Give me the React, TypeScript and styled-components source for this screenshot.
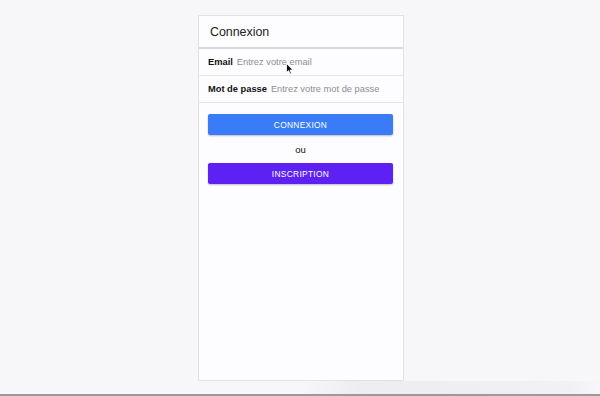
import styled, { createGlobalStyle } from "styled-components";

const GlobalStyle = createGlobalStyle`
  html, body {
    margin: 0;
    padding: 0;
    background: #f7f7f9;
    font-family: "Liberation Sans", Arial, sans-serif;
  }
`;

const Page = styled.div`
  height: 396px;
  display: flex;
  flex-direction: column;
  overflow: hidden;
`;

const Stage = styled.div`
  flex: 1;
  display: flex;
  padding: 15px 0 0 198px;
`;

const Card = styled.div`
  width: 204px;
  height: 364px;
  background: #fdfdff;
  border: 1px solid #e2e2e6;
  display: flex;
  flex-direction: column;
  position: relative;
`;

const Header = styled.div`
  height: 31px;
  display: flex;
  align-items: center;
  padding-left: 11px;
  font-size: 12.4px;
  color: #222;
  border-bottom: 2px solid #d9d9dd;
`;

const Row = styled.div`
  height: 26px;
  display: flex;
  align-items: center;
  gap: 4px;
  padding-left: 9px;
  border-bottom: 1px solid #e4e4e8;
  font-size: 9.3px;
`;

const Label = styled.span`
  font-weight: 700;
  color: #111;
`;

const Placeholder = styled.span`
  color: #8d8d92;
`;

const Actions = styled.div`
  display: flex;
  flex-direction: column;
  align-items: center;
  padding: 11px 10px 0 9px;
`;

const Button = styled.div<{ $color: string }>`
  width: 100%;
  height: 21px;
  border-radius: 2px;
  background: ${(p) => p.$color};
  color: #fff;
  font-size: 8.4px;
  letter-spacing: 0.3px;
  display: flex;
  align-items: center;
  justify-content: center;
  box-shadow: 0 1px 2px rgba(0, 0, 0, 0.25);
`;

const Or = styled.div`
  height: 28px;
  display: flex;
  align-items: center;
  font-size: 9.5px;
  color: #111;
`;

const Cursor = styled.svg`
  position: absolute;
  left: 87px;
  top: 47px;
`;

const Shade = styled.div`
  height: 14px;
  background: linear-gradient(90deg, #f7f7f9 0%, #f7f7f9 50%, #ededef 60%, #f1f1f3 95%, #f7f7f9 100%);
`;

const Bar = styled.div`
  height: 2px;
  background: #9a9a9c;
`;

export default function App() {
  return (
    <Page>
      <GlobalStyle />
      <Stage>
        <Card>
          <Header>Connexion</Header>
          <Row>
            <Label>Email</Label>
            <Placeholder>Entrez votre email</Placeholder>
          </Row>
          <Row>
            <Label>Mot de passe</Label>
            <Placeholder>Entrez votre mot de passe</Placeholder>
          </Row>
          <Actions>
            <Button $color="#3a7cf8">CONNEXION</Button>
            <Or>ou</Or>
            <Button $color="#5e21f3">INSCRIPTION</Button>
          </Actions>
          <Cursor width="8" height="12" viewBox="0 0 8 12">
            <path d="M0.5 0.5 L0.5 9.5 L2.6 7.6 L4 11 L5.4 10.4 L4 7.1 L7 7.1 Z" fill="#111" stroke="#fff" strokeWidth="0.8" />
          </Cursor>
        </Card>
      </Stage>
      <Shade />
      <Bar />
    </Page>
  );
}
